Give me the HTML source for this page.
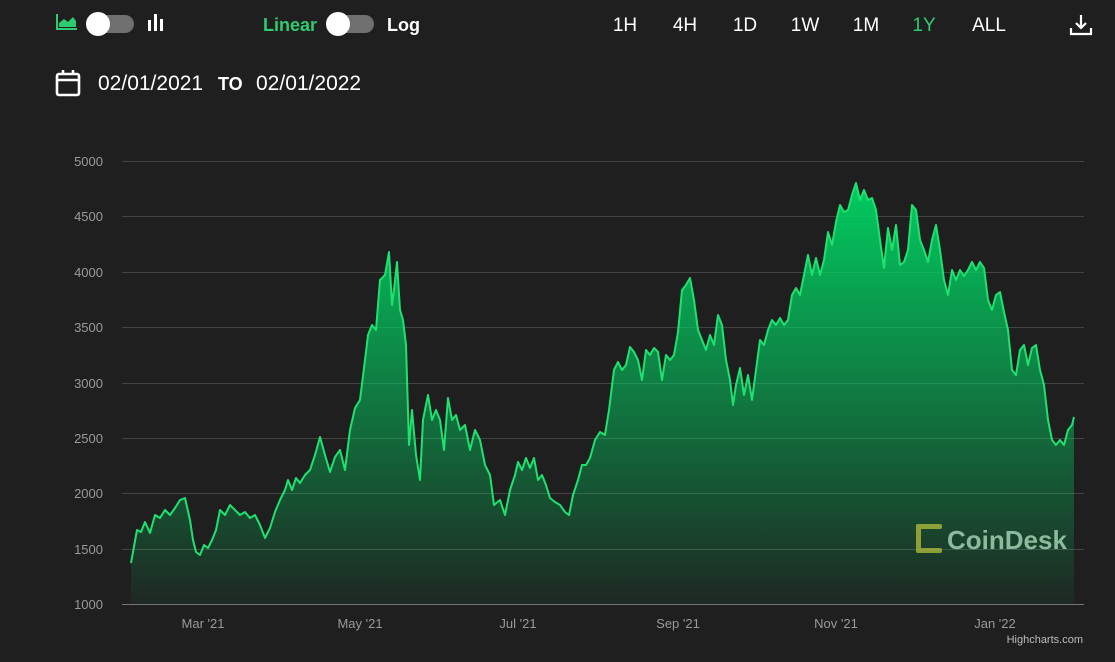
<!DOCTYPE html>
<html><head><style>
body{margin:0;width:1115px;height:662px;background:#1f1f1f;overflow:hidden;font-family:"Liberation Sans",Arial,sans-serif;color:#fff;position:relative}
.a{position:absolute}
.tog{position:absolute;width:46px;height:18px;border-radius:9px;background:#6f6f6f}
.tog:before{content:"";position:absolute;left:-2px;top:-3px;width:24px;height:24px;border-radius:50%;background:#fff}
.tf{position:absolute;top:15px;font-size:19px;transform:translateX(-50%)}
</style></head><body>
<svg class="a" style="left:56px;top:13px" width="22" height="18"><path d="M1 1V16H21" stroke="#2ecc71" stroke-width="2" fill="none"/><path d="M3 14V10L8 6L12 9L17 4L20 8V14Z" fill="#2ecc71"/></svg>
<div class="tog" style="left:88px;top:15px"></div>
<svg class="a" style="left:147px;top:12px" width="18" height="20"><rect x="1" y="8" width="3" height="11" fill="#fff"/><rect x="7" y="2" width="3" height="17" fill="#fff"/><rect x="13" y="7" width="3" height="12" fill="#fff"/></svg>
<div class="a" style="left:263px;top:15px;font-size:18px;font-weight:bold;color:#2ecc71">Linear</div>
<div class="tog" style="left:328px;top:15px"></div>
<div class="a" style="left:387px;top:15px;font-size:18px;font-weight:bold">Log</div>
<div class="tf" style="left:625px">1H</div><div class="tf" style="left:685px">4H</div><div class="tf" style="left:745px">1D</div><div class="tf" style="left:805px">1W</div><div class="tf" style="left:866px">1M</div><div class="tf" style="left:924px;color:#2ecc71">1Y</div><div class="tf" style="left:989px">ALL</div>
<svg class="a" style="left:1069px;top:13px" width="24" height="24" fill="none" stroke="#fff" stroke-width="2.2"><path d="M12 2V15M7 10L12 15L17 10M2 15V21H22V15"/></svg>
<svg class="a" style="left:55px;top:69px" width="27" height="29" fill="none" stroke="#fff" stroke-width="2.6"><rect x="2" y="5" width="22" height="21" rx="2"/><path d="M2 11H24M8 1V6M18 1V6"/></svg>
<div class="a" style="left:98px;top:72px;font-size:21px">02/01/2021</div>
<div class="a" style="left:218px;top:74px;font-size:18px;font-weight:bold">TO</div>
<div class="a" style="left:256px;top:72px;font-size:21px;width:108px;overflow:hidden;white-space:nowrap">02/01/2022</div>
<svg class="a" style="left:0;top:0" width="1115" height="662">
<defs><linearGradient id="g" x1="0" y1="0" x2="0" y2="1"><stop offset="0" stop-color="#00d563" stop-opacity=".95"/><stop offset="1" stop-color="#00d563" stop-opacity=".05"/></linearGradient></defs>
<g stroke="#444" stroke-width="1"><path d="M122 161.5H1084M122 216.5H1084M122 272.5H1084M122 327.5H1084M122 383.5H1084M122 438.5H1084M122 493.5H1084M122 549.5H1084"/></g>
<path d="M122 604.5H1084" stroke="#777"/>
<g fill="#999" font-size="13" text-anchor="end" font-family="Liberation Sans"><text x="103" y="166">5000</text><text x="103" y="221">4500</text><text x="103" y="277">4000</text><text x="103" y="332">3500</text><text x="103" y="388">3000</text><text x="103" y="443">2500</text><text x="103" y="498">2000</text><text x="103" y="554">1500</text><text x="103" y="609">1000</text></g>
<g fill="#999" font-size="13" text-anchor="middle" font-family="Liberation Sans"><text x="203" y="628">Mar '21</text><text x="360" y="628">May '21</text><text x="518" y="628">Jul '21</text><text x="678" y="628">Sep '21</text><text x="836" y="628">Nov '21</text><text x="995" y="628">Jan '22</text></g>
<text x="1083" y="643" fill="#bbb" font-size="11" text-anchor="end" font-family="Liberation Sans">Highcharts.com</text>
<polygon id="ar" fill="url(#g)" points="131,604 131,563 137,530 141,532 145,522 150,533 155,515 160,518 165,510 170,515 175,508 180,500 185,498 190,520 193,540 196,552 200,555 204,545 208,548 212,540 216,530 220,510 225,515 230,505 235,510 240,515 245,512 250,518 255,515 260,525 265,538 270,528 275,512 280,500 285,490 288,480 292,490 296,478 300,483 305,475 310,470 315,455 320,437 325,455 330,472 335,457 340,450 345,470 350,430 355,408 360,400 365,360 368,335 372,325 376,330 380,280 385,275 389,252 392,305 394,290 397,262 400,310 403,320 406,345 409,445 412,410 416,455 420,480 423,420 428,395 432,420 436,410 440,420 444,450 448,398 452,420 456,415 460,430 465,425 470,450 475,430 480,440 485,465 490,475 494,505 500,500 505,515 510,490 515,475 518,462 522,470 526,458 530,468 534,458 538,480 542,475 546,485 550,498 555,502 560,505 565,512 569,515 573,495 578,480 582,465 586,465 590,458 595,440 600,432 605,435 609,410 614,370 618,362 622,370 626,365 630,347 634,352 638,360 642,380 646,350 650,355 654,348 658,352 662,380 666,355 670,360 674,355 678,332 682,290 686,285 690,278 694,300 698,330 702,340 706,350 710,335 714,345 718,315 722,325 726,360 730,380 733,405 736,385 740,368 744,395 748,375 752,400 756,370 760,340 764,345 768,330 772,320 776,325 780,318 784,325 788,320 792,295 796,288 800,295 804,275 808,255 812,275 816,258 820,275 824,260 828,232 832,245 836,222 840,205 844,212 848,210 852,195 856,183 860,200 864,190 868,200 872,198 876,210 880,240 884,268 888,228 892,250 896,225 900,265 904,262 908,250 912,205 916,210 920,240 924,250 928,262 932,240 936,225 940,250 944,280 948,295 952,270 956,280 960,270 964,276 968,270 972,262 976,270 980,262 984,268 988,300 992,310 996,295 1000,292 1004,312 1008,330 1012,370 1016,375 1020,350 1024,345 1028,365 1032,348 1036,345 1040,370 1044,385 1048,420 1052,440 1056,445 1060,440 1064,445 1068,430 1072,425 1074,417 1074,604"/>
<polyline fill="none" stroke="#1ee26f" stroke-width="2" stroke-linejoin="round" points="131,563 137,530 141,532 145,522 150,533 155,515 160,518 165,510 170,515 175,508 180,500 185,498 190,520 193,540 196,552 200,555 204,545 208,548 212,540 216,530 220,510 225,515 230,505 235,510 240,515 245,512 250,518 255,515 260,525 265,538 270,528 275,512 280,500 285,490 288,480 292,490 296,478 300,483 305,475 310,470 315,455 320,437 325,455 330,472 335,457 340,450 345,470 350,430 355,408 360,400 365,360 368,335 372,325 376,330 380,280 385,275 389,252 392,305 394,290 397,262 400,310 403,320 406,345 409,445 412,410 416,455 420,480 423,420 428,395 432,420 436,410 440,420 444,450 448,398 452,420 456,415 460,430 465,425 470,450 475,430 480,440 485,465 490,475 494,505 500,500 505,515 510,490 515,475 518,462 522,470 526,458 530,468 534,458 538,480 542,475 546,485 550,498 555,502 560,505 565,512 569,515 573,495 578,480 582,465 586,465 590,458 595,440 600,432 605,435 609,410 614,370 618,362 622,370 626,365 630,347 634,352 638,360 642,380 646,350 650,355 654,348 658,352 662,380 666,355 670,360 674,355 678,332 682,290 686,285 690,278 694,300 698,330 702,340 706,350 710,335 714,345 718,315 722,325 726,360 730,380 733,405 736,385 740,368 744,395 748,375 752,400 756,370 760,340 764,345 768,330 772,320 776,325 780,318 784,325 788,320 792,295 796,288 800,295 804,275 808,255 812,275 816,258 820,275 824,260 828,232 832,245 836,222 840,205 844,212 848,210 852,195 856,183 860,200 864,190 868,200 872,198 876,210 880,240 884,268 888,228 892,250 896,225 900,265 904,262 908,250 912,205 916,210 920,240 924,250 928,262 932,240 936,225 940,250 944,280 948,295 952,270 956,280 960,270 964,276 968,270 972,262 976,270 980,262 984,268 988,300 992,310 996,295 1000,292 1004,312 1008,330 1012,370 1016,375 1020,350 1024,345 1028,365 1032,348 1036,345 1040,370 1044,385 1048,420 1052,440 1056,445 1060,440 1064,445 1068,430 1072,425 1074,417"/>
<g fill="#a9b83a" opacity=".8"><rect x="916" y="524" width="5" height="28" rx="2"/><rect x="916" y="524" width="26" height="5" rx="2"/><rect x="916" y="548" width="26" height="5" rx="2"/></g>
<text x="947" y="549" fill="#9fd0b0" opacity=".85" font-size="26" font-weight="bold" font-family="Liberation Sans">CoinDesk</text>
</svg>
</body></html>
